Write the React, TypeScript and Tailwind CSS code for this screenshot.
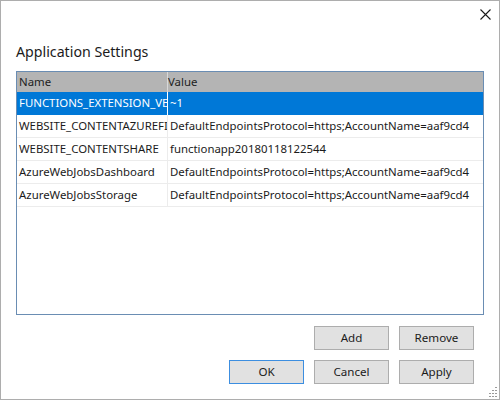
import React from 'react';

const rows = [
    { name: 'FUNCTIONS_EXTENSION_VERSION', value: '~1' },
    { name: 'WEBSITE_CONTENTAZUREFILECONNECTIONSTRING', value: 'DefaultEndpointsProtocol=https;AccountName=aaf9cd4' },
    { name: 'WEBSITE_CONTENTSHARE', value: 'functionapp20180118122544' },
    { name: 'AzureWebJobsDashboard', value: 'DefaultEndpointsProtocol=https;AccountName=aaf9cd4' },
    { name: 'AzureWebJobsStorage', value: 'DefaultEndpointsProtocol=https;AccountName=aaf9cd4' },
];

const Button: React.FC<{ label: string; focused?: boolean }> = ({ label, focused }) => (
    <button
        className={`w-[75px] h-[24px] text-[11.6px] leading-[22px] text-[#1b1b1b] bg-[#e1e1e1] border ${focused ? 'border-[#3c8ee0]' : 'border-[#adadad]'}`}
    >
        {label}
    </button>
);

export default function App() {
    return (
        <div
            className="relative w-[500px] h-[400px] bg-white border border-[#adadad] flex flex-col"
            style={{ fontFamily: '"Noto Sans", "Open Sans", sans-serif' }}
        >
            {/* title bar */}
            <div className="h-[28px] flex justify-end items-start pr-[8px] pt-[8px]">
                <svg width="11" height="11" viewBox="0 0 11 11">
                    <path d="M0.5 0.5 L10.5 10.5 M10.5 0.5 L0.5 10.5" stroke="#1a1a1a" strokeWidth="1.1" />
                </svg>
            </div>

            <div className="pl-[15px] mt-[13px] text-[14.2px] leading-[20px] text-[#1b1b1b]">Application Settings</div>

            {/* grid */}
            <div className="mx-[15px] mt-[9px] h-[244px] border border-[#6a8db3] bg-white flex flex-col overflow-hidden">
                <div className="h-[20px] bg-[#b4b4b4] flex text-[11.4px] leading-[20px] text-[#222]">
                    <div className="w-[151px] pl-[2px] border-r border-[#d8d8d8]">Name</div>
                    <div className="flex-1">Value</div>
                </div>
                {rows.map((row, i) => {
                    const selected = i === 0;
                    return (
                        <div
                            key={row.name}
                            className={`h-[23px] flex text-[11.4px] leading-[22px] ${selected ? 'bg-[#0078d7] text-white' : 'text-[#1b1b1b] border-b border-[#ececec]'}`}
                        >
                            <div
                                className={`w-[151px] pl-[2px] whitespace-nowrap overflow-hidden border-r ${selected ? 'border-white' : 'border-[#ececec]'}`}
                            >
                                {row.name}
                            </div>
                            <div className="flex-1 pl-[2px] whitespace-nowrap overflow-hidden">{row.value}</div>
                        </div>
                    );
                })}
            </div>

            <div className="mt-[11px] pr-[25px] flex justify-end gap-[10px]">
                <Button label="Add" />
                <Button label="Remove" />
            </div>
            <div className="mt-[10px] pr-[25px] flex justify-end gap-[10px]">
                <Button label="OK" focused />
                <Button label="Cancel" />
                <Button label="Apply" />
            </div>

            {/* resize grip */}
            <svg width="10" height="10" viewBox="0 0 10 10" className="absolute right-[2px] bottom-[2px]">
                {[
                    [8, 0], [8, 3], [5, 3], [8, 6], [5, 6], [2, 6], [8, 9], [5, 9], [2, 9],
                ].map(([x, y], i) => (
                    <rect key={i} x={x} y={y} width="2" height="1" fill="#9a9a9a" />
                ))}
            </svg>
        </div>
    );
}
